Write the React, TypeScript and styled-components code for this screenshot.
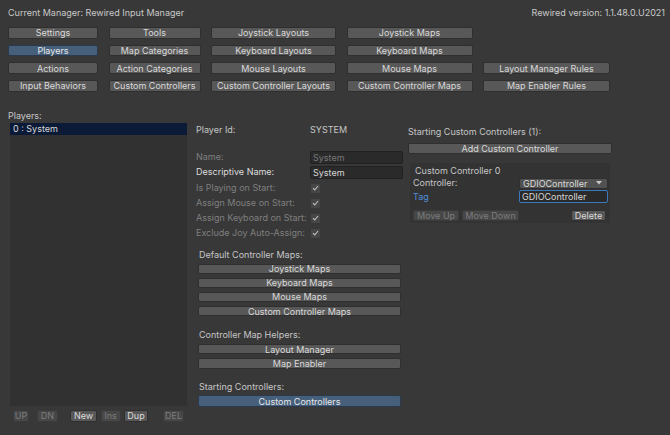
import React from 'react';
import styled, { createGlobalStyle, css } from 'styled-components';

const GlobalStyle = createGlobalStyle`
  html, body {
    margin: 0;
    padding: 0;
    background: #383838;
  }
  body {
    font-family: Inter, 'Noto Sans', 'Liberation Sans', sans-serif;
    font-size: 9px;
    color: #c8c8c8;
  }
`;

const Page = styled.div`
  width: 670px;
  height: 435px;
  box-sizing: border-box;
  overflow: hidden;
  background: #383838;
`;

const Header = styled.div`
  display: flex;
  justify-content: space-between;
  align-items: center;
  height: 12px;
  padding: 6px 5px 0 8px;
`;

const MenuGrid = styled.div`
  display: grid;
  grid-template-columns: 90px 92px 125px 126px 127px;
  grid-auto-rows: 11.5px;
  column-gap: 10.5px;
  row-gap: 6.2px;
  padding: 9px 0 0 8px;
`;

const Button = styled.div<{ $active?: boolean; $disabled?: boolean; $w?: number; $h?: number }>`
  display: flex;
  align-items: center;
  justify-content: center;
  box-sizing: border-box;
  height: ${(p) => p.$h ?? 11.5}px;
  ${(p) => p.$w !== undefined && css`width: ${p.$w}px;`}
  background: #585858;
  border: 1px solid #2f2f2f;
  border-radius: 2px;
  color: #dadada;
  white-space: nowrap;
  line-height: 1;
  ${(p) =>
    p.$active &&
    css`
      background: #46607c;
      border-color: #2a3a4c;
      color: #e8e8e8;
    `}
  ${(p) =>
    p.$disabled &&
    css`
      background: #474747;
      border-color: #3a3a3a;
      color: #7c7c7c;
    `}
`;

const Main = styled.div`
  display: flex;
  padding: 18px 0 0 8px;
`;

const LeftColumn = styled.div`
  width: 180px;
  display: flex;
  flex-direction: column;
`;

const Label = styled.div<{ $dim?: boolean; $blue?: boolean; $bright?: boolean }>`
  height: 12px;
  line-height: 12px;
  white-space: nowrap;
  color: ${(p) => (p.$dim ? '#7f7f7f' : p.$blue ? '#4f8fd8' : p.$bright ? '#dcdcdc' : '#c6c6c6')};
`;

const ListBox = styled.div`
  margin: 1px 0 0 2px;
  width: 177px;
  height: 283px;
  background: #313131;
`;

const ListRow = styled.div`
  height: 12px;
  line-height: 12px;
  padding-left: 3px;
  background: #0b1a37;
  color: #d8d8d8;
`;

const ListButtons = styled.div`
  display: flex;
  align-items: center;
  padding: 4px 0 0 5px;
  gap: 12px;
`;

const Group = styled.div<{ $gap: number; $shift?: number }>`
  display: flex;
  gap: ${(p) => p.$gap}px;
  margin-left: ${(p) => p.$shift ?? 0}px;
`;

const MiddleColumn = styled.div`
  width: 207px;
  margin-left: 8px;
  display: flex;
  flex-direction: column;
`;

const FieldRow = styled.div<{ $h?: number; $top?: number }>`
  display: grid;
  grid-template-columns: 114px 93px;
  align-items: center;
  height: ${(p) => p.$h ?? 13}px;
  margin-top: ${(p) => p.$top ?? 0}px;
`;

const TextInput = styled.div<{ $dim?: boolean; $focus?: boolean }>`
  box-sizing: border-box;
  height: 13px;
  line-height: 11px;
  padding-left: 2px;
  background: #2a2a2a;
  border: 1px solid ${(p) => (p.$focus ? '#3a79bb' : '#212121')};
  border-radius: 2px;
  color: ${(p) => (p.$dim ? '#777' : '#d6d6d6')};
`;

const CheckBox = styled.div`
  width: 9px;
  height: 9px;
  margin-left: 1px;
  border-radius: 1px;
  background: #464646;
  display: flex;
  align-items: center;
  justify-content: center;
`;

const Section = styled.div<{ $top: number }>`
  display: flex;
  flex-direction: column;
  gap: 3.6px;
  margin-top: ${(p) => p.$top}px;
  padding: 0 2px 0 2px;
`;

const SectionLabel = styled(Label)`
  margin-left: 1px;
  margin-bottom: -1px;
`;

const RightColumn = styled.div`
  width: 204px;
  margin-left: 5px;
  display: flex;
  flex-direction: column;
  padding-top: 16.4px;
`;

const AddButton = styled(Button)`
  margin-top: 5px;
`;

const CardBox = styled.div`
  margin: 8.5px 0 0 2px;
  width: 200px;
  height: 60px;
  box-sizing: border-box;
  background: #333333;
  border-radius: 2px;
  padding: 2px 3px 0 3px;
  display: flex;
  flex-direction: column;
`;

const CardRow = styled.div<{ $h: number }>`
  display: grid;
  grid-template-columns: 106px 89px;
  align-items: center;
  height: ${(p) => p.$h}px;
`;

const CardTitle = styled(Label)`
  margin-left: 2px;
`;

const Dropdown = styled(Button)`
  justify-content: space-between;
  padding: 0 5px 0 3px;
  height: 11px;
  background: #515151;
`;

const CardButtons = styled.div`
  display: flex;
  align-items: center;
  margin-top: 6px;
  gap: 3px;
`;

const DeleteButton = styled(Button)`
  margin-left: auto;
  margin-right: 1px;
`;

const Check = () => (
  <svg width="7" height="6" viewBox="0 0 7 6">
    <path d="M1 3.2 L2.8 5 L6 1" fill="none" stroke="#c4c4c4" strokeWidth="1.1" />
  </svg>
);

const Caret = () => (
  <svg width="6" height="4" viewBox="0 0 6 4">
    <path d="M0 0 L6 0 L3 3.5 Z" fill="#c8c8c8" />
  </svg>
);

const menu: { label: string; active?: boolean }[][] = [
  [{ label: 'Settings' }, { label: 'Tools' }, { label: 'Joystick Layouts' }, { label: 'Joystick Maps' }, { label: '' }],
  [{ label: 'Players', active: true }, { label: 'Map Categories' }, { label: 'Keyboard Layouts' }, { label: 'Keyboard Maps' }, { label: '' }],
  [{ label: 'Actions' }, { label: 'Action Categories' }, { label: 'Mouse Layouts' }, { label: 'Mouse Maps' }, { label: 'Layout Manager Rules' }],
  [{ label: 'Input Behaviors' }, { label: 'Custom Controllers' }, { label: 'Custom Controller Layouts' }, { label: 'Custom Controller Maps' }, { label: 'Map Enabler Rules' }],
];

const checks = ['Is Playing on Start:', 'Assign Mouse on Start:', 'Assign Keyboard on Start:', 'Exclude Joy Auto-Assign:'];

export default function App() {
  return (
    <Page>
      <GlobalStyle />
      <Header>
        <span>Current Manager: Rewired Input Manager</span>
        <span>Rewired version: 1.1.48.0.U2021</span>
      </Header>

      <MenuGrid>
        {menu.flat().map((item, i) =>
          item.label ? (
            <Button key={i} $active={item.active}>
              {item.label}
            </Button>
          ) : (
            <div key={i} />
          )
        )}
      </MenuGrid>

      <Main>
        <LeftColumn>
          <Label>Players:</Label>
          <ListBox>
            <ListRow>0 : System</ListRow>
          </ListBox>
          <ListButtons>
            <Group $gap={8}>
              <Button $disabled $w={16} $h={12}>UP</Button>
              <Button $disabled $w={21} $h={12}>DN</Button>
            </Group>
            <Group $gap={3.5}>
              <Button $w={27} $h={12}>New</Button>
              <Button $disabled $w={20} $h={12}>Ins</Button>
              <Button $w={24} $h={12}>Dup</Button>
            </Group>
            <Group $gap={0} $shift={3}>
              <Button $disabled $w={21} $h={12}>DEL</Button>
            </Group>
          </ListButtons>
        </LeftColumn>

        <MiddleColumn>
          <FieldRow $h={14} $top={13.4}>
            <Label>Player Id:</Label>
            <Label>SYSTEM</Label>
          </FieldRow>
          <FieldRow $top={14}>
            <Label $dim>Name:</Label>
            <TextInput $dim>System</TextInput>
          </FieldRow>
          <FieldRow $top={2}>
            <Label $bright>Descriptive Name:</Label>
            <TextInput>System</TextInput>
          </FieldRow>
          {checks.map((c, i) => (
            <FieldRow key={c} $h={15} $top={i === 0 ? 2 : 0}>
              <Label $dim>{c}</Label>
              <CheckBox>
                <Check />
              </CheckBox>
            </FieldRow>
          ))}

          <Section $top={8}>
            <SectionLabel>Default Controller Maps:</SectionLabel>
            <Button $h={10.5}>Joystick Maps</Button>
            <Button $h={10.5}>Keyboard Maps</Button>
            <Button $h={10.5}>Mouse Maps</Button>
            <Button $h={10.5}>Custom Controller Maps</Button>
          </Section>

          <Section $top={13}>
            <SectionLabel>Controller Map Helpers:</SectionLabel>
            <Button $h={10.5}>Layout Manager</Button>
            <Button $h={10.5}>Map Enabler</Button>
          </Section>

          <Section $top={12}>
            <SectionLabel>Starting Controllers:</SectionLabel>
            <Button $active $h={12}>Custom Controllers</Button>
          </Section>
        </MiddleColumn>

        <RightColumn>
          <Label>Starting Custom Controllers (1):</Label>
          <AddButton $h={11.5}>Add Custom Controller</AddButton>
          <CardBox>
            <CardRow $h={12}>
              <CardTitle>Custom Controller 0</CardTitle>
            </CardRow>
            <CardRow $h={13}>
              <Label>Controller:</Label>
              <Dropdown>
                <span>GDIOController</span>
                <Caret />
              </Dropdown>
            </CardRow>
            <CardRow $h={14}>
              <Label $blue>Tag</Label>
              <TextInput $focus>GDIOController</TextInput>
            </CardRow>
            <CardButtons>
              <Button $disabled $w={46} $h={11}>Move Up</Button>
              <Button $disabled $w={57} $h={11}>Move Down</Button>
              <DeleteButton $w={35} $h={11}>Delete</DeleteButton>
            </CardButtons>
          </CardBox>
        </RightColumn>
      </Main>
    </Page>
  );
}
